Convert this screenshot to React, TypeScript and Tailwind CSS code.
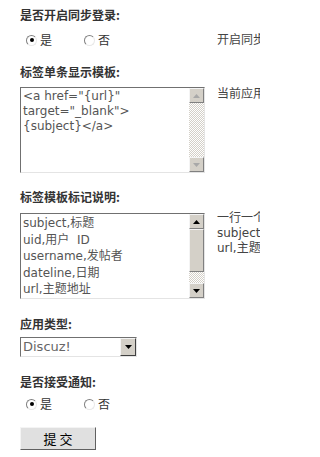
import React from "react";

const cjk = "font-['SimSun','Noto_Sans_CJK_SC',sans-serif]";

function Radio({ checked }: { checked?: boolean }) {
  return (
    <span className="relative inline-flex h-[11px] w-[11px] items-center justify-center rounded-full border border-t-[#808080] border-l-[#808080] border-b-[#e8e8e8] border-r-[#e8e8e8] bg-white">
      {checked && <span className="h-[4px] w-[4px] rounded-full bg-black" />}
    </span>
  );
}

function RadioRow() {
  return (
    <div className={`flex h-4 items-center text-[12px] leading-4 text-[#333] ${cjk}`}>
      <span className="ml-[6px] flex items-center gap-[3px]">
        <Radio checked />
        <span>是</span>
      </span>
      <span className="ml-[32px] flex items-center gap-[3px]">
        <Radio />
        <span>否</span>
      </span>
    </div>
  );
}

function Title({ children }: { children: React.ReactNode }) {
  return (
    <div className={`h-4 text-[12px] font-bold leading-4 text-[#333] ${cjk}`}>{children}</div>
  );
}

function Arrow({ up, color }: { up?: boolean; color: string }) {
  return (
    <svg width="7" height="4" viewBox="0 0 7 4">
      {up ? <polygon points="0,4 7,4 3.5,0" fill={color} /> : <polygon points="0,0 7,0 3.5,4" fill={color} />}
    </svg>
  );
}

function ScrollBtn({ up, color }: { up?: boolean; color: string }) {
  return (
    <div className="flex h-[15px] w-[15px] items-center justify-center border border-t-[#f4f4f4] border-l-[#f4f4f4] border-b-[#808080] border-r-[#808080] bg-[#d4d0c8]">
      <Arrow up={up} color={color} />
    </div>
  );
}

const checker =
  "bg-[image:repeating-conic-gradient(#d4d0c8_0%_25%,#ffffff_0%_50%)] bg-[length:2px_2px]";

export default function App() {
  return (
    <div className="h-[457px] w-[260px] overflow-hidden bg-white pt-[7px]">
      {/* row 1 */}
      <div className="flex">
        <div className="w-[217px] shrink-0 pl-5">
          <Title>是否开启同步登录:</Title>
          <div className="mt-[9px]">
            <RadioRow />
          </div>
        </div>
        <div className={`mt-[24px] whitespace-nowrap text-[12px] leading-4 text-[#444] ${cjk}`}>开启同步</div>
      </div>

      {/* row 2 */}
      <div className="mt-[16px] flex">
        <div className="w-[217px] shrink-0 pl-5">
          <Title>标签单条显示模板:</Title>
          <div className="mt-[7px] flex h-[86px] w-[185px] border border-t-[#707070] border-l-[#707070] border-b-[#e4e4e4] border-r-[#e4e4e4] bg-white">
            <div className="flex-1 whitespace-pre px-[2px] pt-[1px] font-['Tahoma','DejaVu_Sans',sans-serif] text-[12px] leading-[15px] text-[#555]">
              {'<a href="{url}"\ntarget="_blank">\n{subject}</a>'}
            </div>
            <div className="flex w-[15px] flex-col">
              <ScrollBtn up color="#a8a8a8" />
              <div className={`flex-1 ${checker}`} />
              <ScrollBtn color="#a8a8a8" />
            </div>
          </div>
        </div>
        <div className={`mt-[21px] whitespace-nowrap text-[12px] leading-4 text-[#444] ${cjk}`}>当前应用</div>
      </div>

      {/* row 3 */}
      <div className="mt-[16px] flex">
        <div className="w-[217px] shrink-0 pl-5">
          <Title>标签模板标记说明:</Title>
          <div className="mt-[8px] flex h-[86px] w-[185px] border border-t-[#707070] border-l-[#707070] border-b-[#e4e4e4] border-r-[#e4e4e4] bg-white">
            <div className="flex-1 overflow-hidden whitespace-pre px-[2px] pt-[1px] font-['Tahoma','DejaVu_Sans','Noto_Sans_CJK_SC',sans-serif] text-[12px] leading-[16.5px] text-[#555]">
              {"subject,标题\nuid,用户  ID\nusername,发帖者\ndateline,日期\nurl,主题地址"}
            </div>
            <div className="flex w-[15px] flex-col">
              <ScrollBtn up color="#000" />
              <div className="h-[43px] border border-t-[#f4f4f4] border-l-[#f4f4f4] border-b-[#808080] border-r-[#808080] bg-[#d4d0c8]" />
              <div className={`flex-1 ${checker}`} />
              <ScrollBtn color="#000" />
            </div>
          </div>
        </div>
        <div className={`mt-[22px] whitespace-nowrap font-['Tahoma','DejaVu_Sans','Noto_Sans_CJK_SC',sans-serif] text-[12px] leading-[15px] text-[#444]`}>
          <div>一行一个</div>
          <div>subject</div>
          <div>url,主题</div>
        </div>
      </div>

      {/* row 4 */}
      <div className="mt-[17px] pl-5">
        <Title>应用类型:</Title>
        <div className="mt-[5px] flex h-[20px] w-[117px] border border-t-[#707070] border-l-[#707070] border-b-[#e4e4e4] border-r-[#e4e4e4] bg-white">
          <div className="flex-1 pl-[2px] font-['Tahoma','DejaVu_Sans',sans-serif] text-[13px] leading-[18px] text-[#666]">Discuz!</div>
          <div className="flex h-[18px] w-[16px] items-center justify-center border border-t-[#f4f4f4] border-l-[#f4f4f4] border-b-[#404040] border-r-[#404040] bg-[#d4d0c8]">
            <Arrow color="#000" />
          </div>
        </div>
      </div>

      {/* row 5 */}
      <div className="mt-[17px] pl-5">
        <Title>是否接受通知:</Title>
        <div className="mt-[6px]">
          <RadioRow />
        </div>
        <button
          className={`mt-[15px] flex h-[23px] w-[76px] items-center justify-center border border-t-[#f4f4f4] border-l-[#f4f4f4] border-b-[#606060] border-r-[#606060] bg-[#e0e0e0] text-[13px] text-black ${cjk}`}
        >
          提 交
        </button>
      </div>
    </div>
  );
}
